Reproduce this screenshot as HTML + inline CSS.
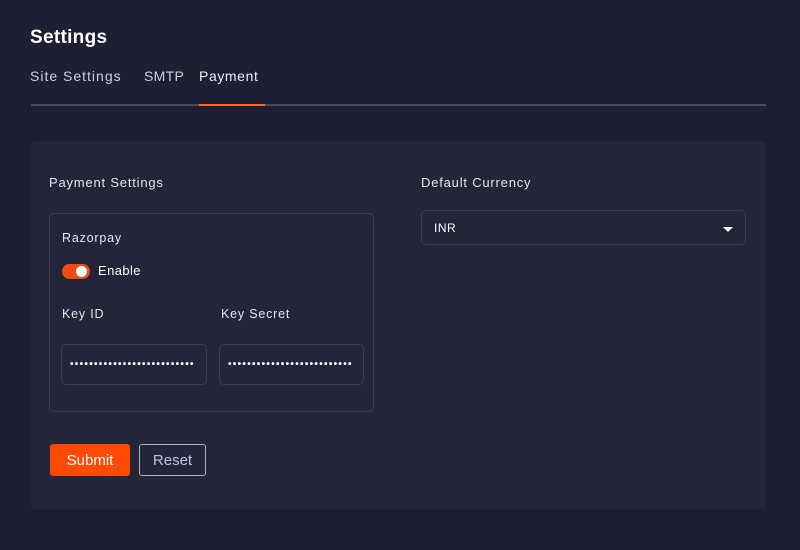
<!DOCTYPE html>
<html><head><style>
*{box-sizing:border-box;margin:0;padding:0}
body{width:800px;height:550px;background:#1f1f33;font-family:"Liberation Sans",sans-serif;color:#e6e6ee;position:relative;overflow:hidden}
.a{position:absolute;white-space:nowrap}
.t{letter-spacing:0.8px}
.in{position:absolute;border:1px solid #3a3a50;border-radius:5px}
.dots{position:absolute;left:8px;top:14px;font-size:10px;letter-spacing:1.3px;color:#fff;font-weight:bold}
</style></head><body>
<div class="a" style="left:30px;top:27px;font-size:19px;font-weight:bold;color:#fff;letter-spacing:0.3px">Settings</div>
<div class="a t" style="left:30px;top:68px;font-size:14px;color:#cfd0dc;letter-spacing:1px">Site Settings</div>
<div class="a t" style="left:144px;top:68px;font-size:14px;color:#cfd0dc;letter-spacing:0.3px">SMTP</div>
<div class="a t" style="left:199px;top:68px;font-size:14px;color:#eee;letter-spacing:0.6px">Payment</div>
<div class="a" style="left:31px;top:104px;width:735px;height:2px;background:#4a4a5e"></div>
<div class="a" style="left:199px;top:104px;width:66px;height:2px;background:#ff6a1a"></div>
<div class="a" style="left:31px;top:141px;width:735px;height:368px;background:#25253a;border-radius:4px"></div>
<div class="a t" style="left:49px;top:175px;font-size:13px">Payment Settings</div>
<div class="in" style="left:49px;top:213px;width:325px;height:199px"></div>
<div class="a t" style="left:62px;top:231px;font-size:12.5px">Razorpay</div>
<div class="a" style="left:62px;top:264px;width:28px;height:15px;border-radius:8px;background:#f04c12"></div>
<div class="a" style="left:76px;top:266px;width:11px;height:11px;border-radius:50%;background:#fff"></div>
<div class="a t" style="left:98px;top:263px;font-size:13px;color:#fff;letter-spacing:0.4px">Enable</div>
<div class="a t" style="left:62px;top:307px;font-size:12.5px">Key ID</div>
<div class="a t" style="left:221px;top:307px;font-size:12.5px">Key Secret</div>
<div class="in" style="left:61px;top:344px;width:146px;height:41px"><span class="dots">••••••••••••••••••••••••••</span></div>
<div class="in" style="left:219px;top:344px;width:145px;height:41px"><span class="dots">••••••••••••••••••••••••••</span></div>
<div class="a" style="left:50px;top:444px;width:80px;height:32px;background:#ff4a05;border-radius:3px;color:#fff;font-size:15px;text-align:center;line-height:33px">Submit</div>
<div class="a" style="left:139px;top:444px;width:67px;height:32px;border:1px solid #aab0c8;border-radius:3px;color:#c0c4e4;font-size:15px;text-align:center;line-height:31px">Reset</div>
<div class="a t" style="left:421px;top:175px;font-size:13px">Default Currency</div>
<div class="in" style="left:421px;top:210px;width:325px;height:35px"><span class="a" style="left:12px;top:10px;font-size:12px;color:#fff;letter-spacing:0.5px">INR</span>
<span class="a" style="left:301px;top:16px;width:0;height:0;border-left:5px solid transparent;border-right:5px solid transparent;border-top:5px solid #fff"></span></div>
</body></html>
